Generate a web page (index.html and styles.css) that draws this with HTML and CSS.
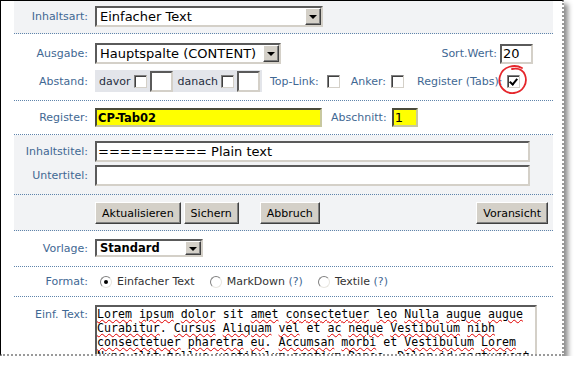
FILE: index.html
```html
<!DOCTYPE html>
<html>
    <head lang="de">
        <meta charset="UTF-8">
        <title>Inhalt bearbeiten</title>
        <link rel="stylesheet" href="styles.css">
    </head>
    <body>
        <div id="paper">
            <form id="editor">
                <div class="row grey r1">
                    <label class="lbl">Inhaltsart:</label>
                    <div class="line">
                        <span class="sel w-art"><select><option>Einfacher Text</option></select><i class="drop"></i></span>
                    </div>
                </div>
                <div class="row r2">
                    <label class="lbl">Ausgabe:</label>
                    <div class="line">
                        <span class="sel w-ausgabe"><select><option>Hauptspalte (CONTENT)</option></select><i class="drop"></i></span>
                        <label class="lbl sort">Sort.Wert:</label>
                        <input class="txt w-sort" value="20">
                    </div>
                    <label class="lbl">Abstand:</label>
                    <div class="line">
                        <span class="abstand">
                            <span>davor</span><input type="checkbox" class="cb"><input class="txt small">
                            <span>danach</span><input type="checkbox" class="cb"><input class="txt small last">
                        </span>
                        <label class="lbl toplink">Top-Link:</label><input type="checkbox" class="cb cb-top">
                        <label class="lbl anker">Anker:</label><input type="checkbox" class="cb cb-anker">
                        <label class="lbl tabs">Register (Tabs):</label>
                        <span class="mark">
                            <input type="checkbox" class="cb" checked>
                            <svg class="circle" width="32" height="32" viewBox="0 0 32 32">
                                <path d="M25 4 C18 0 6 2 3 12 C0 22 8 30 17 29 C26 28 31 19 28 11 C26 6 21 4 15 5" fill="none" stroke="#e5262b" stroke-width="1.8" stroke-linecap="round"/>
                            </svg>
                        </span>
                    </div>
                </div>
                <div class="row r3">
                    <label class="lbl">Register:</label>
                    <div class="line">
                        <input class="txt yel w-reg" value="CP-Tab02">
                        <label class="lbl abs">Abschnitt:</label>
                        <input class="txt yel w-abs" value="1">
                    </div>
                </div>
                <div class="row grey r4">
                    <label class="lbl">Inhaltstitel:</label>
                    <input class="txt w-full" value="========== Plain text">
                    <label class="lbl">Untertitel:</label>
                    <input class="txt w-full" value="">
                </div>
                <div class="row grey r5">
                    <span></span>
                    <div class="line">
                        <button type="button" class="btn b-akt">Aktualisieren</button>
                        <button type="button" class="btn b-sich">Sichern</button>
                        <button type="button" class="btn">Abbruch</button>
                        <button type="button" class="btn b-vor">Voransicht</button>
                    </div>
                </div>
                <div class="row r6">
                    <label class="lbl">Vorlage:</label>
                    <div class="line">
                        <span class="sel w-vorlage"><select><option>Standard</option></select><i class="drop"></i></span>
                    </div>
                </div>
                <div class="row r7">
                    <label class="lbl">Format:</label>
                    <div class="line radios">
                        <input type="radio" name="fmt" class="rb" checked><span>Einfacher Text</span>
                        <input type="radio" name="fmt" class="rb"><span>MarkDown <a>(?)</a></span>
                        <input type="radio" name="fmt" class="rb"><span>Textile <a>(?)</a></span>
                    </div>
                </div>
                <div class="row r8">
                    <label class="lbl top">Einf. Text:</label>
                    <div class="area"><span class="sp">Lorem</span> <span class="sp">ipsum</span> <span class="sp">dolor</span> sit <span class="sp">amet</span> <span class="sp">consectetuer</span> <span class="sp">leo</span> <span class="sp">Nulla</span> <span class="sp">augue</span> <span class="sp">augue</span>
<span class="sp">Curabitur</span>. <span class="sp">Cursus</span> <span class="sp">Aliquam</span> <span class="sp">vel</span> et <span class="sp">ac</span> <span class="sp">neque</span> <span class="sp">Vestibulum</span> <span class="sp">nibh</span>
<span class="sp">consectetuer</span> <span class="sp">pharetra</span> <span class="sp">eu</span>. <span class="sp">Accumsan</span> <span class="sp">morbi</span> et <span class="sp">Vestibulum</span> <span class="sp">Lorem</span>
<span class="sp">Nunc</span> <span class="sp">elit</span> <span class="sp">tellus</span> <span class="sp">vestibulum</span> <span class="sp">pretium</span> <span class="sp">Donec</span>. <span class="sp">Dolor</span> id <span class="sp">parturient</span></div>
                </div>
            </form>
        </div>
    </body>
</html>
```

FILE: styles.css
```css
*{
    margin:0;
    padding:0;
}
html,body{
    overflow:hidden;
}
body{
    background:#fff;
    font-family:"DejaVu Sans",Verdana,sans-serif;
    font-size:11px;
}
#paper{
    width:561px;
    height:353px;
    background:#fff;
    border-left:1px solid #000;
    border-top:1px solid #000;
    border-right:2px dotted #9a9a9a;
    border-bottom:2px dotted #9a9a9a;
    box-shadow:4px 4px 5px rgba(0,0,0,.45);
    overflow:hidden;
}
#editor{
    margin-left:13px;
    width:539px;
}
.row{
    display:grid;
    grid-template-columns:74px 1fr;
    column-gap:7px;
    align-items:center;
    padding-right:5px;
    border-bottom:1px dotted #5f84ab;
}
.grey{
    background:#f2f3f5;
}
.lbl{
    color:#3f6893;
    text-align:right;
    white-space:nowrap;
}
.line{
    display:flex;
    align-items:center;
}

.r1{ padding:5px 5px 6px 0; }
.r2{ padding:9px 5px 8px 0; row-gap:6px; }
.r3{ padding:7px 5px 7px 0; }
.r4{ padding:6px 5px 8px 0; row-gap:3px; }
.r5{ padding:7px 5px 6px 0; }
.r6{ padding:8px 5px 9px 0; }
.r7{ padding:8px 5px 8px 0; }
.r8{ padding:8px 5px 0 0; align-items:start; border-bottom:none; }
.lbl.top{ padding-top:3px; }

/* selects */
.sel{
    display:flex;
    box-sizing:border-box;
    height:21px;
    background:#fff;
    border:2px solid;
    border-color:#5a5a5a #d4d0c8 #d4d0c8 #5a5a5a;
}
.sel select{
    appearance:none;
    -webkit-appearance:none;
    flex:1;
    min-width:0;
    border:none;
    outline:none;
    background:transparent;
    font-family:"DejaVu Sans",Verdana,sans-serif;
    font-size:13px;
    color:#000;
    padding-left:3px;
}
.drop{
    width:14px;
    background:#d4d0c8;
    border:1px solid;
    border-color:#fff #404040 #404040 #fff;
    box-shadow:inset -1px -1px #808080;
    display:flex;
    align-items:center;
    justify-content:center;
}
.drop::before{
    content:"";
    border-left:4px solid transparent;
    border-right:4px solid transparent;
    border-top:4px solid #000;
    margin-top:1px;
}
.w-art{ width:228px; }
.w-ausgabe{ width:186px; }
.w-vorlage{ width:108px; height:18px; }
.w-vorlage select{ font-weight:bold; font-size:11.5px; }

/* text fields */
.txt{
    box-sizing:border-box;
    border:2px solid;
    border-color:#5a5a5a #d4d0c8 #d4d0c8 #5a5a5a;
    background:#fff;
    outline:none;
    font-family:"DejaVu Sans",Verdana,sans-serif;
    font-size:13px;
    color:#000;
    padding:0 1px;
}
.sort{ margin-left:auto; margin-right:3px; }
.w-sort{ width:33px; height:20px; margin-right:15px; }
.w-full{ width:435px; height:21px; }
.yel{
    background:#ffff00;
    height:19px;
    border-color:#4a4a3a #c8c8a0 #c8c8a0 #4a4a3a;
}
.w-reg{ width:227px; font-weight:bold; font-size:11.5px; }
.abs{ margin:0 5px 0 9px; }
.w-abs{ width:26px; }

/* abstand */
.abstand{
    display:flex;
    align-items:center;
    height:22px;
    background:#e3e5ea;
    color:#252d3d;
    padding:0 2px 0 4px;
    margin-right:8px;
}
.abstand .cb{ margin:0 3px 0 3px; }
.small{ width:23px; height:21px; margin-right:5px; }
.small.last{ margin-right:0; }

.cb{
    appearance:none;
    -webkit-appearance:none;
    box-sizing:border-box;
    width:13px;
    height:13px;
    background:#fff;
    border:1px solid;
    border-color:#808080 #d4d0c8 #d4d0c8 #808080;
    box-shadow:inset 1px 1px #404040;
    position:relative;
}
.cb:checked::after{
    content:"";
    position:absolute;
    left:3px;
    top:1px;
    width:3px;
    height:6px;
    border:solid #000;
    border-width:0 2px 2px 0;
    transform:rotate(40deg);
}
.toplink{ margin-right:8px; }
.cb-top{ margin-right:11px; }
.anker{ margin-right:5px; }
.cb-anker{ margin-right:13px; }
.tabs{ margin-right:5px; }
.mark{
    position:relative;
    display:flex;
}
.circle{
    position:absolute;
    left:-10px;
    top:-11px;
}

/* buttons */
.btn{
    height:22px;
    padding:0 6px;
    background:#d4d0c8;
    border:1px solid;
    border-color:#fff #404040 #404040 #fff;
    box-shadow:inset -1px -1px #808080;
    font-family:"DejaVu Sans",Verdana,sans-serif;
    font-size:11px;
    color:#000;
}
.b-akt{ margin-right:3px; }
.b-sich{ margin-right:21px; }
.b-vor{ margin-left:auto; }

/* radios */
.radios{
    color:#333;
}
.rb{
    appearance:none;
    -webkit-appearance:none;
    box-sizing:border-box;
    width:12px;
    height:12px;
    border-radius:50%;
    background:#fff;
    border:1px solid;
    border-color:#808080 #e8e6e0 #e8e6e0 #808080;
    margin:0 5px 0 15px;
    position:relative;
}
.rb:first-child{ margin-left:5px; }
.rb:checked::after{
    content:"";
    position:absolute;
    left:3px;
    top:3px;
    width:4px;
    height:4px;
    border-radius:50%;
    background:#000;
}
.radios a{
    color:#3f6893;
}

/* text area */
.area{
    box-sizing:border-box;
    width:442px;
    height:60px;
    background:#fff;
    border:2px solid;
    border-color:#5a5a5a #d4d0c8 #d4d0c8 #5a5a5a;
    font-family:"DejaVu Sans Mono","Liberation Mono",monospace;
    font-size:11.6px;
    line-height:14px;
    white-space:pre;
    overflow:hidden;
    color:#000;
}
.sp{
    text-decoration:underline wavy #e00000;
    text-decoration-thickness:1px;
    text-underline-offset:1px;
}
```
